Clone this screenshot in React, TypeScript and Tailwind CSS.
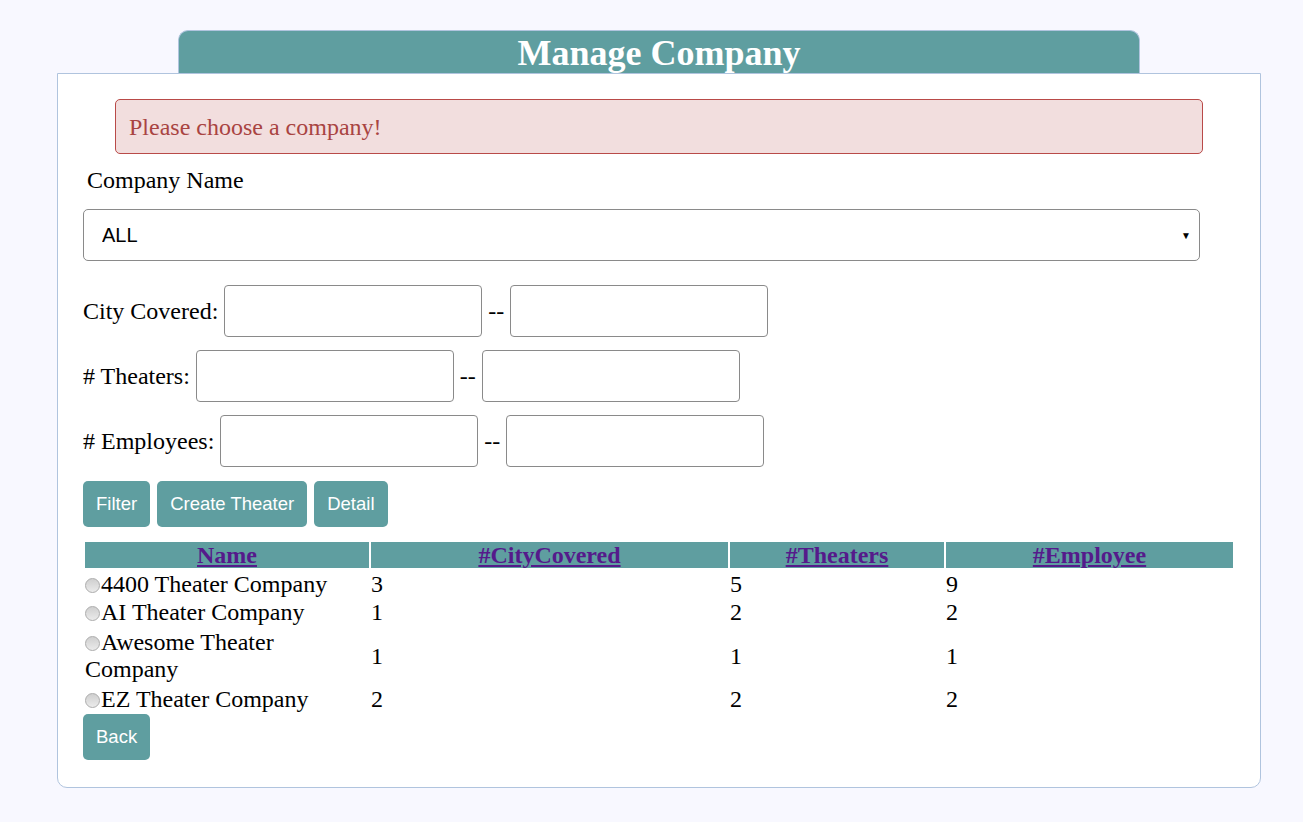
import React from 'react';

const serif = { fontFamily: '"Liberation Serif", "Times New Roman", serif' };

const companies = [
  { name: '4400 Theater Company', cities: 3, theaters: 5, employees: 9 },
  { name: 'AI Theater Company', cities: 1, theaters: 2, employees: 2 },
  { name: 'Awesome Theater Company', cities: 1, theaters: 1, employees: 1 },
  { name: 'EZ Theater Company', cities: 2, theaters: 2, employees: 2 },
];

function RangeRow({ label }: { label: string }) {
  return (
    <div className="flex items-center gap-[6px] text-[24px] text-black">
      <span>{label}</span>
      <input className="w-[258px] h-[52px] border border-[#8a8a8a] rounded-[4px] bg-white outline-none" />
      <span>--</span>
      <input className="w-[258px] h-[52px] border border-[#8a8a8a] rounded-[4px] bg-white outline-none" />
    </div>
  );
}

function Btn({ children }: { children: React.ReactNode }) {
  return (
    <button className="h-[46px] px-[13px] bg-[#5f9ea0] text-white text-[18.5px] rounded-[5px] font-['Liberation_Sans',Arial,sans-serif]">
      {children}
    </button>
  );
}

function Radio() {
  return (
    <span className="inline-block align-[-1px] w-[15px] h-[15px] mr-[1px] rounded-full border border-[#acacac] bg-gradient-to-b from-[#cfcfcf] to-[#ebebeb]" />
  );
}

export default function App() {
  return (
    <div className="min-h-screen bg-[#f8f8ff] pt-[30px] pb-[34px]" style={serif}>
      <div className="ml-[57px] w-[1204px]">
        <div className="mx-auto w-[962px] h-[43px] bg-[#5f9ea0] rounded-t-[10px] border border-b-0 border-[#b0c4de] flex items-center justify-center">
          <h1 className="text-white text-[36px] font-bold leading-none pt-[2px]">Manage Company</h1>
        </div>

        <div className="bg-white border border-[#b0c4de] rounded-b-[10px] px-[25px] pt-[25px] pb-[27px]">
          <div className="mx-[32px] h-[55px] flex items-center px-[13px] bg-[#f2dede] border border-[#b94a48] rounded-[5px] text-[#a94442] text-[24px]">
            Please choose a company!
          </div>

          <div className="mt-[12px] pl-[4px] text-[24px] text-black leading-[28px]">Company Name</div>

          <div className="relative mt-[15px] w-[1117px]">
            <select className="appearance-none w-full h-[52px] border border-[#8a8a8a] rounded-[5px] bg-white pl-[18px] text-[20px] text-black outline-none font-['Liberation_Sans',Arial,sans-serif]">
              <option>ALL</option>
            </select>
            <span className="pointer-events-none absolute right-[9px] top-[19px] text-[10px] text-black">▼</span>
          </div>

          <div className="mt-[24px] flex flex-col gap-[13px]">
            <RangeRow label="City Covered:" />
            <RangeRow label="# Theaters:" />
            <RangeRow label="# Employees:" />
          </div>

          <div className="mt-[14px] flex gap-[7px]">
            <Btn>Filter</Btn>
            <Btn>Create Theater</Btn>
            <Btn>Detail</Btn>
          </div>

          <table className="mt-[13px] border-separate border-spacing-[2px] table-fixed text-[24px] text-black">
            <colgroup>
              <col className="w-[284px]" />
              <col className="w-[357px]" />
              <col className="w-[214px]" />
              <col className="w-[287px]" />
            </colgroup>
            <thead>
              <tr>
                {['Name', '#CityCovered', '#Theaters', '#Employee'].map((h) => (
                  <th key={h} className="bg-[#5f9ea0] font-bold p-0 h-[26px] leading-[26px]">
                    <a href="#" className="text-[#551a8b] underline">{h}</a>
                  </th>
                ))}
              </tr>
            </thead>
            <tbody>
              {companies.map((c) => {
                const wraps = c.name.length > 20;
                return (
                  <tr key={c.name}>
                    <td className={wraps ? 'p-0 pt-[3px] align-middle leading-[27px]' : 'p-0 pt-[3px] align-middle leading-[23px]'}>
                      <Radio />
                      {c.name}
                    </td>
                    <td className="p-0 pt-[3px] align-middle leading-[23px]">{c.cities}</td>
                    <td className="p-0 pt-[3px] align-middle leading-[23px]">{c.theaters}</td>
                    <td className="p-0 pt-[3px] align-middle leading-[23px]">{c.employees}</td>
                  </tr>
                );
              })}
            </tbody>
          </table>

          <div className="flex mt-[1px]">
            <Btn>Back</Btn>
          </div>
        </div>
      </div>
    </div>
  );
}
